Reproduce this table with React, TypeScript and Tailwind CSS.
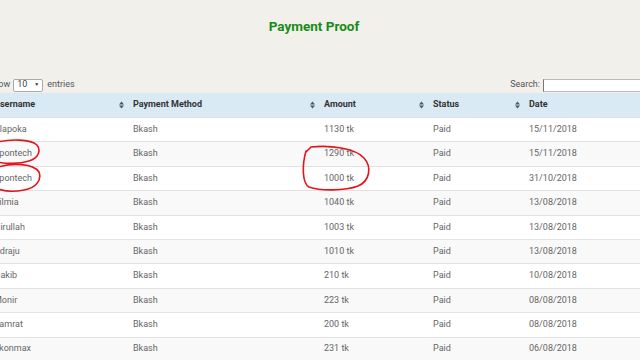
import React from "react";

const rows = [
  ["Alapoka", "Bkash", "1130 tk", "Paid", "15/11/2018"],
  ["Spontech", "Bkash", "1290 tk", "Paid", "15/11/2018"],
  ["Spontech", "Bkash", "1000 tk", "Paid", "31/10/2018"],
  ["Silmia", "Bkash", "1040 tk", "Paid", "13/08/2018"],
  ["Hirullah", "Bkash", "1003 tk", "Paid", "13/08/2018"],
  ["Udraju", "Bkash", "1010 tk", "Paid", "13/08/2018"],
  ["Hakib", "Bkash", "210 tk", "Paid", "10/08/2018"],
  ["Monir", "Bkash", "223 tk", "Paid", "08/08/2018"],
  ["Samrat", "Bkash", "200 tk", "Paid", "08/08/2018"],
  ["Ekonmax", "Bkash", "231 tk", "Paid", "06/08/2018"],
];

const headers = ["Username", "Payment Method", "Amount", "Status", "Date"];

function SortIcon() {
  return (
    <svg width="5" height="8" viewBox="0 0 5 8" className="shrink-0">
      <path d="M0 3.4 L2.5 0.4 L5 3.4 Z" fill="#555" />
      <path d="M0 4.6 L5 4.6 L2.5 7.6 Z" fill="#555" />
    </svg>
  );
}

export default function App() {
  return (
    <div
      className="relative w-[640px] h-[360px] overflow-hidden bg-white"
      style={{ fontFamily: "Roboto, 'Liberation Sans', sans-serif" }}
    >
      <div className="bg-[#f2f0ea] h-[93px] flex flex-col pt-[16px]">
        <h1 className="text-center pr-[12px] text-[13.5px] leading-[20px] font-bold text-[#178c17]">
          Payment Proof
        </h1>
        <div className="mt-auto mb-[1px] ml-[-12px] w-[700px] h-[14px] flex items-center text-[9px] text-[#555]">
          <span>Show</span>
          <div className="ml-[3px] w-[30px] h-[13px] bg-white border border-[#aaa] rounded-[2px] flex items-center justify-between pl-[3px] pr-[3px]">
            <span className="text-[9px] text-[#444]">10</span>
            <span className="text-[5px] text-[#333]">▼</span>
          </div>
          <span className="ml-[4px]">entries</span>
          <div className="flex-1" />
          <span>Search:</span>
          <div className="ml-[3px] w-[145px] h-[13px] bg-white border border-[#bbb] border-l-[#777]" />
        </div>
      </div>

      <div className="ml-[-13px] w-[700px]">
        <div className="grid grid-cols-[139px_191px_109px_96px_1fr] h-[24px] bg-[#d9eaf5]">
          {headers.map((h) => (
            <div
              key={h}
              className="flex items-center justify-between pl-[7px] pr-[2px] text-[9px] font-bold text-[#333]"
            >
              <span>{h}</span>
              {h !== "Date" ? <SortIcon /> : null}
            </div>
          ))}
        </div>
        {rows.map((r, i) => (
          <div
            key={i}
            className={
              "grid grid-cols-[139px_191px_109px_96px_1fr] h-[24.4px] border-t border-[#e2e2e2] " +
              (i % 2 === 1 ? "bg-[#f9f9f9]" : "bg-white")
            }
          >
            {r.map((c, j) => (
              <div key={j} className="flex items-center pl-[7px] text-[9px] text-[#666]">
                {c}
              </div>
            ))}
          </div>
        ))}
      </div>

      <svg
        className="absolute left-0 top-0 pointer-events-none"
        width="640"
        height="360"
        viewBox="0 0 640 360"
      >
        <g fill="none" stroke="#e3141b" strokeWidth="1.6" strokeLinecap="round">
          <path d="M-2 142 C 10 139, 30 139, 37 145 C 41 150, 39 158, 29 161 C 19 164, 6 164, -2 162" />
          <path d="M-2 167 C 12 163, 33 163, 39 172 C 42 180, 36 188, 24 190 C 14 192, 4 191, -2 189" />
          <path d="M306 152 L311 147 C 330 145, 355 148, 364 158 C 372 167, 370 181, 358 186 C 345 191, 320 191, 309 187 C 302 183, 302 165, 306 151" />
        </g>
      </svg>
    </div>
  );
}
